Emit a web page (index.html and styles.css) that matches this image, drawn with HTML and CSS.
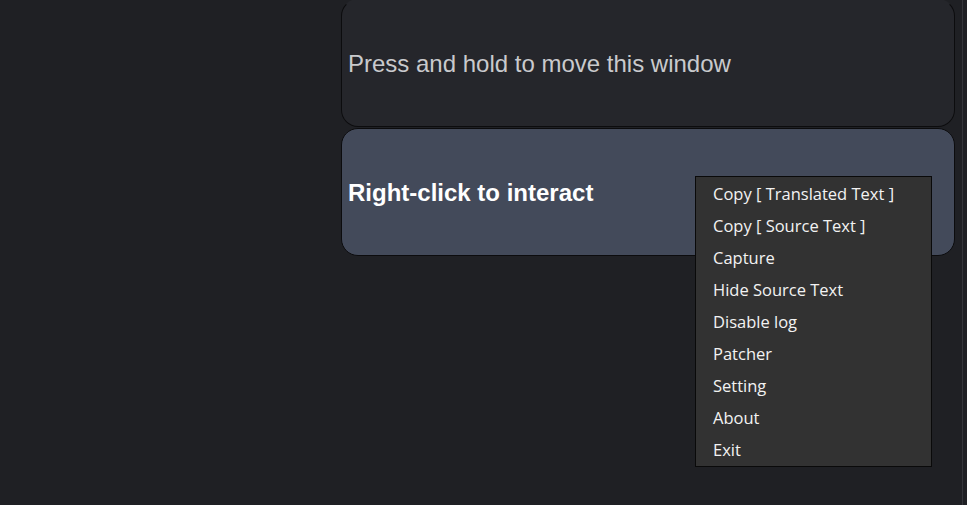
FILE: index.html
```html
<!DOCTYPE html>
<html>
  <head>
    <meta charset="UTF-8">
    <title>Overlay</title>
    <link rel="stylesheet" href="styles.css">
  </head>
  <body>
    <div class="side"></div>
    <div class="panel">
      <div class="card card-move">
        <p>Press and hold to move this window</p>
      </div>
      <div class="card card-text">
        <p>Right-click to interact</p>
      </div>
    </div>
    <div class="edge"></div>
    <ul class="menu">
      <li>Copy [ Translated Text ]</li>
      <li>Copy [ Source Text ]</li>
      <li>Capture</li>
      <li>Hide Source Text</li>
      <li>Disable log</li>
      <li>Patcher</li>
      <li>Setting</li>
      <li>About</li>
      <li>Exit</li>
    </ul>
  </body>
</html>
```

FILE: styles.css
```css
html, body {
  height: 100%;
}

body {
  margin: 0;
  padding: 0;
  display: flex;
  background-color: #1f2024;
  font-family: "Liberation Sans", Arial, sans-serif;
  overflow: hidden;
}

.side {
  width: 341px;
  flex-shrink: 0;
}

.panel {
  width: 614px;
  flex-shrink: 0;
  display: flex;
  flex-direction: column;
  gap: 1px;
}

.card {
  height: 126px;
  border: 1px solid #0c0c0e;
  border-radius: 17px;
  display: flex;
  align-items: center;
  padding-left: 6px;
}

.card p {
  margin: 0;
  font-size: 24px;
  padding-top: 2px;
}

.card-move {
  background-color: #25262b;
  border-top-color: transparent;
  margin-top: -1px;
}

.card-move p {
  color: #c9cacd;
}

.card-text {
  background-color: #434a5a;
}

.card-text p {
  color: #ffffff;
  font-weight: bold;
}

.edge {
  width: 7px;
  flex-shrink: 0;
  border-right: 1px solid #35363b;
}

.menu {
  position: absolute;
  left: 695px;
  top: 176px;
  width: 235px;
  height: 288px;
  margin: 0;
  padding: 1px 0 0;
  list-style: none;
  background-color: #323232;
  border: 1px solid #0a0a0a;
  font-family: "Open Sans", "Noto Sans", sans-serif;
  font-size: 16.5px;
  color: #f2f2f2;
}

.menu li {
  height: 32px;
  line-height: 32px;
  padding-left: 17px;
}
```
